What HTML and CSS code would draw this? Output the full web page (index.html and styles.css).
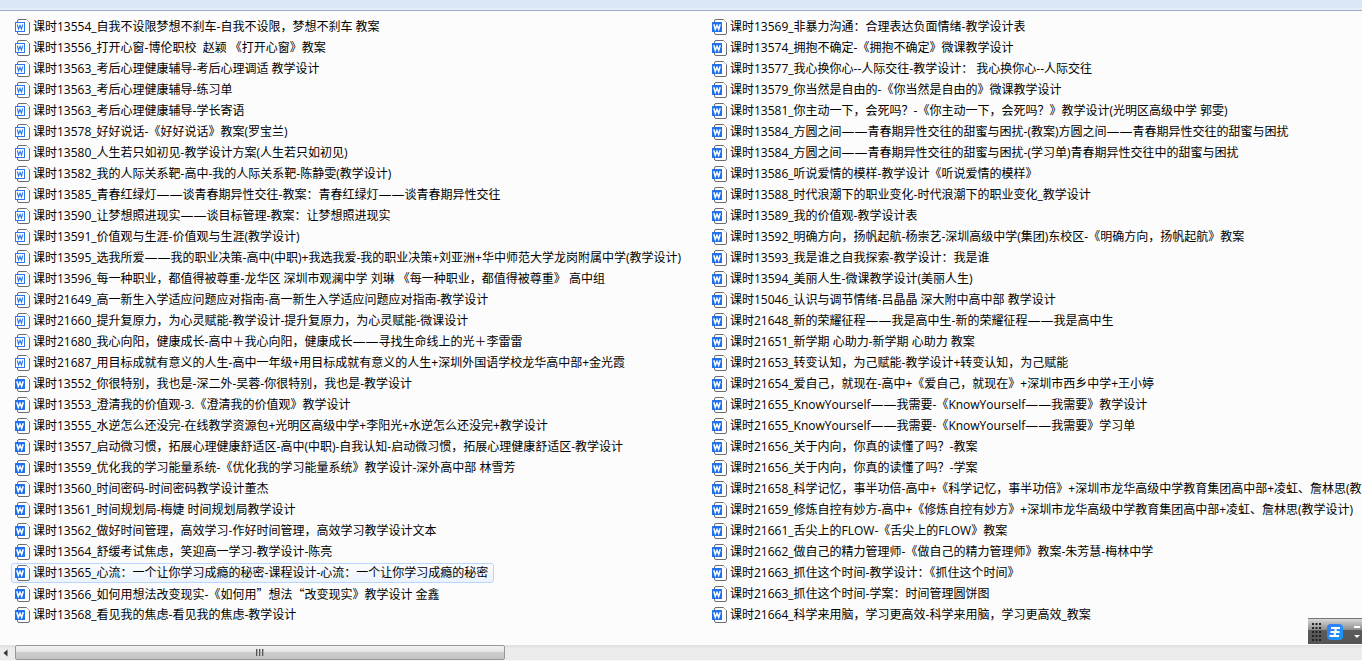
FILE: index.html
```html
<!DOCTYPE html>
<html lang="zh-CN">
<head>
<meta charset="utf-8">
<title>课时</title>
<link rel="stylesheet" href="styles.css">
</head>
<body>
<svg class="defs" aria-hidden="true">
  <symbol id="page" viewBox="0 0 16 16">
    <path d="M2.500 3V2Q2.500 .5 4 .5H11.500L14.500 3.500V14Q14.500 15.500 13 15.500H4Q2.500 15.500 2.500 14V13" fill="#fff" stroke="#6b6b6b"/>
    <path d="M11.500 .5L14.500 3.500" stroke="#aaa" stroke-width="1"/>
  </symbol>
  <symbol id="doc" viewBox="0 0 16 16">
    <use href="#page"/>
    <rect x="0.500" y="3.500" width="9" height="9" fill="#fff" stroke="#2b78ee"/>
    <polyline points="2.300,5.500 3.500,10 5,6.500 6.500,10 7.700,5.500" fill="none" stroke="#2b78ee" stroke-width="1.100"/>
  </symbol>
  <symbol id="docx" viewBox="0 0 16 16">
    <use href="#page"/>
    <rect x="0" y="3" width="10" height="10" rx="0.500" fill="#1f70ee"/>
    <polyline points="1.800,5.200 3.300,10.300 5,6.300 6.700,10.300 8.200,5.200" fill="none" stroke="#fff" stroke-width="1.500"/>
  </symbol>
</svg>

<header class="toolbar"></header>

<main class="pane">
<ul class="files">
<li><a href="#"><svg><use href="#doc"/></svg>课时13554_自我不设限梦想不刹车-自我不设限，梦想不刹车 教案</a></li>
<li><a href="#"><svg><use href="#doc"/></svg>课时13556_打开心窗-博伦职校&nbsp; 赵颖 《打开心窗》教案</a></li>
<li><a href="#"><svg><use href="#doc"/></svg>课时13563_考后心理健康辅导-考后心理调适 教学设计</a></li>
<li><a href="#"><svg><use href="#doc"/></svg>课时13563_考后心理健康辅导-练习单</a></li>
<li><a href="#"><svg><use href="#doc"/></svg>课时13563_考后心理健康辅导-学长寄语</a></li>
<li><a href="#"><svg><use href="#doc"/></svg>课时13578_好好说话-《好好说话》教案(罗宝兰)</a></li>
<li><a href="#"><svg><use href="#doc"/></svg>课时13580_人生若只如初见-教学设计方案(人生若只如初见)</a></li>
<li><a href="#"><svg><use href="#doc"/></svg>课时13582_我的人际关系靶-高中-我的人际关系靶-陈静雯(教学设计)</a></li>
<li><a href="#"><svg><use href="#doc"/></svg>课时13585_青春红绿灯<span class="dash">——</span>谈青春期异性交往-教案：青春红绿灯<span class="dash">——</span>谈青春期异性交往</a></li>
<li><a href="#"><svg><use href="#doc"/></svg>课时13590_让梦想照进现实<span class="dash">——</span>谈目标管理-教案：让梦想照进现实</a></li>
<li><a href="#"><svg><use href="#doc"/></svg>课时13591_价值观与生涯-价值观与生涯(教学设计)</a></li>
<li><a href="#"><svg><use href="#doc"/></svg>课时13595_选我所爱<span class="dash">——</span>我的职业决策-高中(中职)+我选我爱-我的职业决策+刘亚洲+华中师范大学龙岗附属中学(教学设计)</a></li>
<li><a href="#"><svg><use href="#doc"/></svg>课时13596_每一种职业，都值得被尊重-龙华区 深圳市观澜中学 刘琳 《每一种职业，都值得被尊重》 高中组</a></li>
<li><a href="#"><svg><use href="#doc"/></svg>课时21649_高一新生入学适应问题应对指南-高一新生入学适应问题应对指南-教学设计</a></li>
<li><a href="#"><svg><use href="#doc"/></svg>课时21660_提升复原力，为心灵赋能-教学设计-提升复原力，为心灵赋能-微课设计</a></li>
<li><a href="#"><svg><use href="#doc"/></svg>课时21680_我心向阳，健康成长-高中＋我心向阳，健康成长<span class="dash">——</span>寻找生命线上的光＋李雷雷</a></li>
<li><a href="#"><svg><use href="#doc"/></svg>课时21687_用目标成就有意义的人生-高中一年级+用目标成就有意义的人生+深圳外国语学校龙华高中部+金光霞</a></li>
<li><a href="#"><svg><use href="#docx"/></svg>课时13552_你很特别，我也是-深二外-吴蓉-你很特别，我也是-教学设计</a></li>
<li><a href="#"><svg><use href="#docx"/></svg>课时13553_澄清我的价值观-3.《澄清我的价值观》教学设计</a></li>
<li><a href="#"><svg><use href="#docx"/></svg>课时13555_水逆怎么还没完-在线教学资源包+光明区高级中学+李阳光+水逆怎么还没完+教学设计</a></li>
<li><a href="#"><svg><use href="#docx"/></svg>课时13557_启动微习惯，拓展心理健康舒适区-高中(中职)-自我认知-启动微习惯，拓展心理健康舒适区-教学设计</a></li>
<li><a href="#"><svg><use href="#docx"/></svg>课时13559_优化我的学习能量系统-《优化我的学习能量系统》教学设计-深外高中部 林雪芳</a></li>
<li><a href="#"><svg><use href="#docx"/></svg>课时13560_时间密码-时间密码教学设计董杰</a></li>
<li><a href="#"><svg><use href="#docx"/></svg>课时13561_时间规划局-梅婕 时间规划局教学设计</a></li>
<li><a href="#"><svg><use href="#docx"/></svg>课时13562_做好时间管理，高效学习-作好时间管理，高效学习教学设计文本</a></li>
<li><a href="#"><svg><use href="#docx"/></svg>课时13564_舒缓考试焦虑，笑迎高一学习-教学设计-陈亮</a></li>
<li><a href="#" class="active"><svg><use href="#docx"/></svg>课时13565_心流：一个让你学习成瘾的秘密-课程设计-心流：一个让你学习成瘾的秘密</a></li>
<li><a href="#"><svg><use href="#docx"/></svg>课时13566_如何用想法改变现实-《如何用<span class="quote">”</span>想法<span class="quote">“</span>改变现实》教学设计 金鑫</a></li>
<li><a href="#"><svg><use href="#docx"/></svg>课时13568_看见我的焦虑-看见我的焦虑-教学设计</a></li>
<li><a href="#"><svg><use href="#docx"/></svg>课时13569_非暴力沟通：合理表达负面情绪-教学设计表</a></li>
<li><a href="#"><svg><use href="#docx"/></svg>课时13574_拥抱不确定-《拥抱不确定》微课教学设计</a></li>
<li><a href="#"><svg><use href="#docx"/></svg>课时13577_我心换你心--人际交往-教学设计： 我心换你心--人际交往</a></li>
<li><a href="#"><svg><use href="#docx"/></svg>课时13579_你当然是自由的-《你当然是自由的》微课教学设计</a></li>
<li><a href="#"><svg><use href="#docx"/></svg>课时13581_你主动一下，会死吗？-《你主动一下，会死吗？》教学设计(光明区高级中学 郭雯)</a></li>
<li><a href="#"><svg><use href="#docx"/></svg>课时13584_方圆之间<span class="dash">——</span>青春期异性交往的甜蜜与困扰-(教案)方圆之间<span class="dash">——</span>青春期异性交往的甜蜜与困扰</a></li>
<li><a href="#"><svg><use href="#docx"/></svg>课时13584_方圆之间<span class="dash">——</span>青春期异性交往的甜蜜与困扰-(学习单)青春期异性交往中的甜蜜与困扰</a></li>
<li><a href="#"><svg><use href="#docx"/></svg>课时13586_听说爱情的模样-教学设计《听说爱情的模样》</a></li>
<li><a href="#"><svg><use href="#docx"/></svg>课时13588_时代浪潮下的职业变化-时代浪潮下的职业变化_教学设计</a></li>
<li><a href="#"><svg><use href="#docx"/></svg>课时13589_我的价值观-教学设计表</a></li>
<li><a href="#"><svg><use href="#docx"/></svg>课时13592_明确方向，扬帆起航-杨崇艺-深圳高级中学(集团)东校区-《明确方向，扬帆起航》教案</a></li>
<li><a href="#"><svg><use href="#docx"/></svg>课时13593_我是谁之自我探索-教学设计：我是谁</a></li>
<li><a href="#"><svg><use href="#docx"/></svg>课时13594_美丽人生-微课教学设计(美丽人生)</a></li>
<li><a href="#"><svg><use href="#docx"/></svg>课时15046_认识与调节情绪-吕晶晶 深大附中高中部 教学设计</a></li>
<li><a href="#"><svg><use href="#docx"/></svg>课时21648_新的荣耀征程<span class="dash">——</span>我是高中生-新的荣耀征程<span class="dash">——</span>我是高中生</a></li>
<li><a href="#"><svg><use href="#docx"/></svg>课时21651_新学期 心助力-新学期 心助力 教案</a></li>
<li><a href="#"><svg><use href="#docx"/></svg>课时21653_转变认知，为己赋能-教学设计+转变认知，为己赋能</a></li>
<li><a href="#"><svg><use href="#docx"/></svg>课时21654_爱自己，就现在-高中+《爱自己，就现在》+深圳市西乡中学+王小婷</a></li>
<li><a href="#"><svg><use href="#docx"/></svg>课时21655_KnowYourself<span class="dash">——</span>我需要-《KnowYourself<span class="dash">——</span>我需要》教学设计</a></li>
<li><a href="#"><svg><use href="#docx"/></svg>课时21655_KnowYourself<span class="dash">——</span>我需要-《KnowYourself<span class="dash">——</span>我需要》学习单</a></li>
<li><a href="#"><svg><use href="#docx"/></svg>课时21656_关于内向，你真的读懂了吗？-教案</a></li>
<li><a href="#"><svg><use href="#docx"/></svg>课时21656_关于内向，你真的读懂了吗？-学案</a></li>
<li><a href="#"><svg><use href="#docx"/></svg>课时21658_科学记忆，事半功倍-高中+《科学记忆，事半功倍》+深圳市龙华高级中学教育集团高中部+凌虹、詹林思(教学设计)</a></li>
<li><a href="#"><svg><use href="#docx"/></svg>课时21659_修炼自控有妙方-高中+《修炼自控有妙方》+深圳市龙华高级中学教育集团高中部+凌虹、詹林思(教学设计)</a></li>
<li><a href="#"><svg><use href="#docx"/></svg>课时21661_舌尖上的FLOW-《舌尖上的FLOW》教案</a></li>
<li><a href="#"><svg><use href="#docx"/></svg>课时21662_做自己的精力管理师-《做自己的精力管理师》教案-朱芳慧-梅林中学</a></li>
<li><a href="#"><svg><use href="#docx"/></svg>课时21663_抓住这个时间-教学设计：《抓住这个时间》</a></li>
<li><a href="#"><svg><use href="#docx"/></svg>课时21663_抓住这个时间-学案：时间管理圆饼图</a></li>
<li><a href="#"><svg><use href="#docx"/></svg>课时21664_科学来用脑，学习更高效-科学来用脑，学习更高效_教案</a></li>
</ul>
</main>

<footer class="scrollbar">
  <button class="arrow" aria-label="向左滚动"><svg viewBox="0 0 5 8"><path d="M4.500 0.500V7.500L0.500 4Z" fill="#333"/></svg></button>
  <button class="thumb" aria-label="水平滚动"><svg viewBox="0 0 9 7"><path d="M0.500 0V7M3.500 0V7M6.500 0V7" stroke="#555"/><path d="M1.500 0V7M4.500 0V7M7.500 0V7" stroke="#aaa"/></svg></button>
</footer>

<aside class="ime">
  <svg class="grip" viewBox="0 0 9 18"><path d="M0 1H9M0 5H9M0 9H9M0 13H9M0 17H9" stroke="#222" stroke-width="2" stroke-dasharray="2 1.500"/></svg>
  <button class="logo" aria-label="输入法"><svg viewBox="0 0 16 16"><path d="M4 4H13M3.500 8H12.500M2.500 12H12M9 4L7.500 12" fill="none" stroke="#fff" stroke-width="2"/></svg></button>
  <span class="controls">
    <button class="ctl" aria-label="最小化"><svg viewBox="0 0 6 3"><rect width="6" height="2" fill="#fff"/></svg></button>
    <button class="ctl" aria-label="菜单"><svg viewBox="0 0 6 3"><path d="M0 0H6L3 3Z" fill="#fff"/></svg></button>
  </span>
</aside>
</body>
</html>
```
FILE: styles.css
```css
* { box-sizing: border-box; }

body {
  margin: 0;
  height: 100vh;
  display: flex;
  flex-direction: column;
  position: relative;
  overflow: hidden;
  background: #fcfcfc;
  color: #000;
  font: 12px/18px "Open Sans", "Noto Sans CJK SC", sans-serif;
}

button {
  margin: 0;
  padding: 0;
  border: 0;
  background: none;
  display: flex;
  align-items: center;
  justify-content: center;
}

.defs { position: absolute; width: 0; height: 0; }

.toolbar {
  flex: none;
  height: 11px;
  background: linear-gradient(#dce7f5 8px, #e4edf8 8px);
  border-bottom: 1px solid #a0afc8;
}

.pane { flex: 1; min-height: 0; overflow: hidden; padding: 6px 0 0 11px; }

.files {
  margin: 0;
  padding: 0;
  list-style: none;
  display: grid;
  grid-auto-flow: column;
  grid-template-rows: repeat(29, 20px);
  grid-template-columns: 687px max-content;
  gap: 1px 10px;
}

.files a {
  display: block;
  width: max-content;
  height: 20px;
  padding: 0 5px 0 3px;
  border: 1px solid transparent;
  border-radius: 3px;
  color: inherit;
  text-decoration: none;
  white-space: pre;
}

.files svg { float: left; width: 16px; height: 16px; margin: 1px 2px 0 0; }

.files .active {
  border-color: #b8d6fb;
  background: linear-gradient(#fafcff, #ebf3fd);
}

.quote { font-family: "Noto Sans CJK SC", sans-serif; }

/* Joined em dashes */
.dash { font: 13px/1 "DejaVu Sans", sans-serif; }

.scrollbar {
  flex: none;
  height: 16px;
  display: flex;
  background: linear-gradient(#dfdfdf, #ececec 4px, #ececec 15px, #f8f8f8 15px);
}

.arrow { width: 15px; padding-right: 5px; }
.arrow svg { width: 5px; height: 8px; }

.thumb {
  width: 36%;
  height: 15px;
  border: 1px solid #979797;
  border-radius: 2px;
  background: linear-gradient(#f3f3f3, #e3e3e3 50%, #cdcdcf 50%, #c4c4c6);
}
.thumb svg { width: 9px; height: 7px; }

.ime {
  position: absolute;
  right: 0;
  bottom: 17px;
  width: 54px;
  height: 26px;
  display: flex;
  align-items: center;
  padding-left: 4px;
  border-top: 1px solid #777;
  background: linear-gradient(#d8d8d8, #8c8c8c 11px, #5c5c5c 11px, #555);
}

.grip { width: 9px; height: 18px; margin-right: 6px; }

.logo {
  width: 16px;
  height: 16px;
  border-radius: 4px;
  background: linear-gradient(135deg, #3a78f8, #159cf8);
}
.logo svg { width: 16px; height: 16px; }

.controls { display: grid; gap: 6px; margin-left: 11px; }
.ctl svg { width: 6px; height: 3px; }
```
